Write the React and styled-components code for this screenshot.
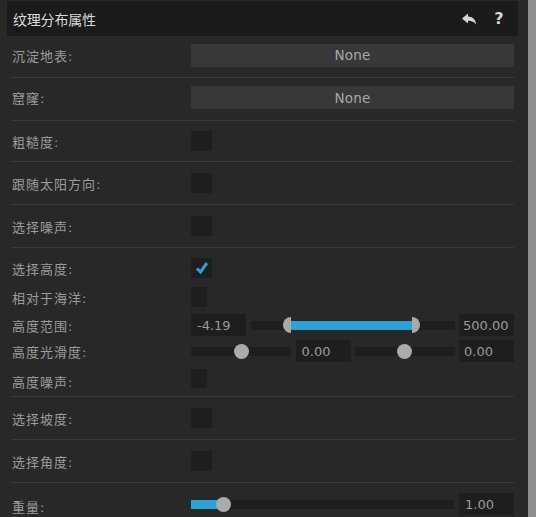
import React from 'react';
import styled, { createGlobalStyle } from 'styled-components';

const GlobalStyle = createGlobalStyle`
  html, body {
    margin: 0;
    padding: 0;
    background: #282828;
    overflow: hidden;
  }
  body {
    font-family: "DejaVu Sans", "Noto Sans CJK SC", sans-serif;
  }
`;

const Page = styled.div`
  display: flex;
  width: 536px;
  height: 517px;
  background: #282828;
  overflow: hidden;
`;

const Panel = styled.div`
  width: 511px;
  padding: 1px 0 0 7px;
`;

const Scrollbar = styled.div`
  margin-left: auto;
  width: 8px;
  background: #8e8e8e;
`;

const Header = styled.div`
  display: flex;
  align-items: center;
  height: 35px;
  padding: 0 10px 0 6px;
  background: #1b1b1b;
  color: #dadada;
  font-size: 14px;
  font-family: "Noto Sans CJK SC", sans-serif;
`;

const Title = styled.span`
  flex: 1;
  letter-spacing: -0.2px;
`;

const IconButton = styled.span`
  display: flex;
  align-items: center;
  justify-content: center;
  width: 18px;
  margin-left: 12px;
  color: #d6d6d6;
  font-family: "DejaVu Sans", sans-serif;
  font-weight: bold;
  font-size: 16px;
`;

const Body = styled.div`
  padding: 0 4px 0 4px;
`;

const Row = styled.div`
  display: grid;
  grid-template-columns: 180px 1fr;
  align-items: ${p => p.$align || 'center'};
  min-height: ${p => p.$h || 42}px;
  padding-bottom: ${p => p.$pb || 0}px;
  padding-top: ${p => p.$pt || 0}px;
  border-bottom: ${p => (p.$last ? 'none' : '1px solid #3a3a3a')};
  box-sizing: border-box;
`;

const Section = styled.div`
  padding: 10px 0 11px;
  border-bottom: 1px solid #3a3a3a;
`;

const SubRow = styled.div`
  display: grid;
  grid-template-columns: 180px 1fr;
  align-items: center;
  height: ${p => p.$h}px;
  margin-top: ${p => p.$mt || 0}px;
`;

const Label = styled.span`
  padding-left: 1px;
  color: #9c9c9c;
  font-size: 13px;
  letter-spacing: 1px;
  white-space: nowrap;
  margin-top: ${p => p.$dy || 0}px;
`;

const SelectButton = styled.div`
  height: 23px;
  background: #383838;
  color: #a8a8a8;
  font-size: 13.5px;
  letter-spacing: 0.2px;
  display: flex;
  align-items: center;
  justify-content: center;
`;

const Check = styled.div`
  width: ${p => p.$w || 21}px;
  height: ${p => p.$hh || 20}px;
  background: #1e1e1e;
  display: flex;
  align-items: center;
  justify-content: center;
`;

const Controls = styled.div`
  display: grid;
  grid-template-columns: ${p => p.$cols};
  column-gap: ${p => p.$gap || 4}px;
  align-items: center;
`;

const ValueBox = styled.div`
  height: 22px;
  background: #1e1e1e;
  color: #9a9a9a;
  font-size: 13px;
  display: flex;
  align-items: center;
  padding-left: ${p => p.$pl || 5}px;
  white-space: nowrap;
`;

const Track = styled.div`
  position: relative;
  height: 9px;
  background: #1e1e1e;
`;

const Fill = styled.div`
  position: absolute;
  top: 0;
  bottom: 0;
  background: #2ca2d6;
`;

const Knob = styled.div`
  position: absolute;
  top: 50%;
  width: 15px;
  height: 15px;
  margin: -7.5px 0 0 -7.5px;
  border-radius: 50%;
  background: #ababab;
`;

const HalfKnob = styled.div`
  position: absolute;
  top: 50%;
  width: 8px;
  height: 16px;
  margin-top: -8px;
  background: #a9a9a9;
  border-radius: ${p => (p.$side === 'left' ? '8px 0 0 8px' : '0 8px 8px 0')};
`;

const Slider = ({ value, fill }) => (
  <Track>
    {fill && <Fill style={{ left: 0, width: `${value}%` }} />}
    <Knob style={{ left: `${value}%` }} />
  </Track>
);

const RangeSlider = ({ from, to }) => (
  <Track>
    <Fill style={{ left: `${from}%`, width: `${to - from}%` }} />
    <HalfKnob $side="left" style={{ left: `calc(${from}% - 8px)` }} />
    <HalfKnob $side="right" style={{ left: `${to}%` }} />
  </Track>
);

const BackIcon = () => (
  <svg width="16" height="14" viewBox="0 0 16 14">
    <path
      d="M1 6.5 L7 1.5 V4.5 C11.5 4.5 15 7.5 15 12.5 C13 10 11 8.8 7 8.8 V11.5 Z"
      fill="#d6d6d6"
    />
  </svg>
);

const CheckMark = () => (
  <svg width="14" height="14" viewBox="0 0 14 14">
    <path d="M2 7.5 L5.5 11 L12 2" fill="none" stroke="#2ca2d6" strokeWidth="3" />
  </svg>
);

export default function App() {
  return (
    <Page>
      <GlobalStyle />
      <Panel>
        <Header>
          <Title>纹理分布属性</Title>
          <IconButton><BackIcon /></IconButton>
          <IconButton>?</IconButton>
        </Header>
        <Body>
          <Row $pb={3} $h={42}>
            <Label>沉淀地表:</Label>
            <SelectButton>None</SelectButton>
          </Row>
          <Row $pb={3} $h={43}>
            <Label>窟窿:</Label>
            <SelectButton>None</SelectButton>
          </Row>
          <Row $h={41}>
            <Label>粗糙度:</Label>
            <Check />
          </Row>
          <Row $h={43}>
            <Label>跟随太阳方向:</Label>
            <Check />
          </Row>
          <Row $h={43}>
            <Label>选择噪声:</Label>
            <Check />
          </Row>
          <Section>
            <SubRow $h={20}>
              <Label>选择高度:</Label>
              <Check><CheckMark /></Check>
            </SubRow>
            <SubRow $h={20} $mt={9}>
              <Label>相对于海洋:</Label>
              <Check $w={16} />
            </SubRow>
            <SubRow $h={22} $mt={7}>
              <Label>高度范围:</Label>
              <Controls $cols="55px 1fr 55px" $gap={4.5}>
                <ValueBox $pl={6}>-4.19</ValueBox>
                <RangeSlider from={19.7} to={79} />
                <ValueBox $pl={4}>500.00</ValueBox>
              </Controls>
            </SubRow>
            <SubRow $h={22} $mt={4}>
              <Label>高度光滑度:</Label>
              <Controls $cols="100px 55px 1fr 55px" $gap={4.5}>
                <Slider value={50} />
                <ValueBox $pl={6}>0.00</ValueBox>
                <Slider value={50} />
                <ValueBox>0.00</ValueBox>
              </Controls>
            </SubRow>
            <SubRow $h={19} $mt={4}>
              <Label $dy={6}>高度噪声:</Label>
              <Check $w={16} $hh={19} />
            </SubRow>
          </Section>
          <Row $h={43}>
            <Label>选择坡度:</Label>
            <Check />
          </Row>
          <Row $h={43}>
            <Label>选择角度:</Label>
            <Check />
          </Row>
          <Row $last $pt={10} $h={33} $align="start">
            <Label $dy={4}>重量:</Label>
            <Controls $cols="1fr 55px" $gap={5}>
              <Slider value={12.5} fill />
              <ValueBox $pl={6}>1.00</ValueBox>
            </Controls>
          </Row>
        </Body>
      </Panel>
      <Scrollbar />
    </Page>
  );
}
